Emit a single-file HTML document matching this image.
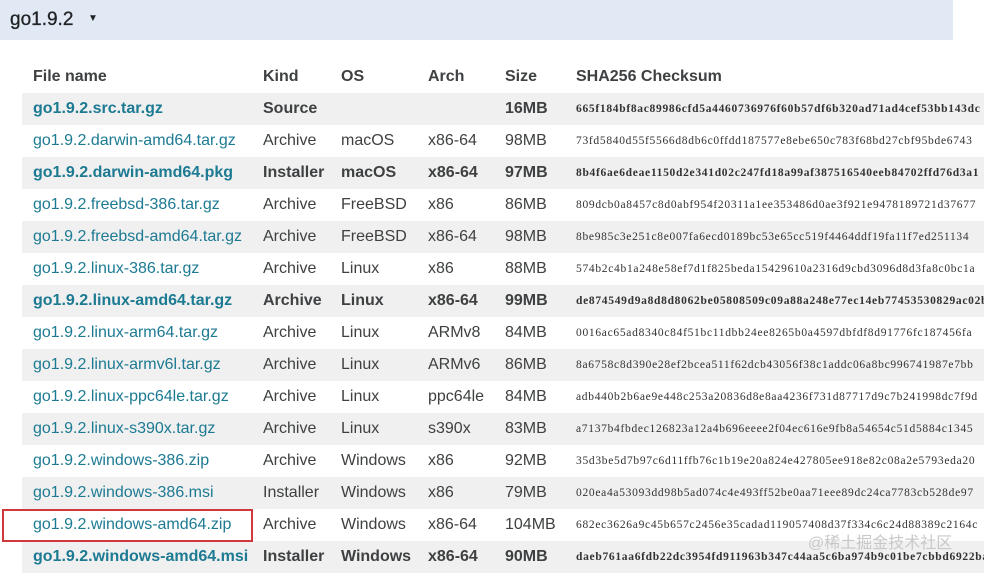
<!DOCTYPE html>
<html><head><meta charset="utf-8"><style>
body{margin:0;width:984px;height:569px;background:#fff;overflow:hidden;font-family:"Liberation Sans",Arial,sans-serif;position:relative}
.top{position:absolute;left:0;top:0;width:953px;height:40px;background:#e0e9f4}
.top span{position:absolute;left:10px;top:9px;font-size:19px;color:#202224;-webkit-text-stroke:0.3px #202224}
.top i{position:absolute;left:88px;top:13px;font-size:10px;font-style:normal;color:#202224}
table{position:absolute;left:22px;top:61px;border-collapse:collapse;width:962px;table-layout:fixed}
td,th{padding:0;height:32px;text-align:left;font-size:16px;color:#3e4042;white-space:nowrap;overflow:visible}
th{font-weight:bold;color:#3e4042;vertical-align:middle}
tr.s td{background:#f0f0f0}
td a{color:#1c7a92;text-decoration:none}
tr.b td{font-weight:bold}
td.h{font-family:"Liberation Serif",serif;font-size:11.5px;letter-spacing:0.7px;font-weight:normal!important;color:#333}
tr.b td.h{font-weight:bold!important}
.box{position:absolute;left:2px;top:509px;width:247px;height:29px;border:2px solid #d0393c}
.wm{position:absolute;left:808px;top:529px;font-size:16px;color:#c8c8c8;font-family:"Liberation Sans","Noto Sans CJK SC",sans-serif}
</style></head><body>
<div class="top"><span>go1.9.2</span><i>▼</i></div>
<table>
<colgroup><col style="width:241px"><col style="width:78px"><col style="width:87px"><col style="width:77px"><col style="width:71px"><col></colgroup>
<tr><th style="padding-left:11px">File name</th><th>Kind</th><th>OS</th><th>Arch</th><th>Size</th><th>SHA256 Checksum</th></tr>
<tr class="s b"><td style="padding-left:11px"><a>go1.9.2.src.tar.gz</a></td><td>Source</td><td></td><td></td><td>16MB</td><td class="h">665f184bf8ac89986cfd5a4460736976f60b57df6b320ad71ad4cef53bb143dc</td></tr>
<tr><td style="padding-left:11px"><a>go1.9.2.darwin-amd64.tar.gz</a></td><td>Archive</td><td>macOS</td><td>x86-64</td><td>98MB</td><td class="h">73fd5840d55f5566d8db6c0ffdd187577e8ebe650c783f68bd27cbf95bde6743</td></tr>
<tr class="s b"><td style="padding-left:11px"><a>go1.9.2.darwin-amd64.pkg</a></td><td>Installer</td><td>macOS</td><td>x86-64</td><td>97MB</td><td class="h">8b4f6ae6deae1150d2e341d02c247fd18a99af387516540eeb84702ffd76d3a1</td></tr>
<tr><td style="padding-left:11px"><a>go1.9.2.freebsd-386.tar.gz</a></td><td>Archive</td><td>FreeBSD</td><td>x86</td><td>86MB</td><td class="h">809dcb0a8457c8d0abf954f20311a1ee353486d0ae3f921e9478189721d37677</td></tr>
<tr class="s"><td style="padding-left:11px"><a>go1.9.2.freebsd-amd64.tar.gz</a></td><td>Archive</td><td>FreeBSD</td><td>x86-64</td><td>98MB</td><td class="h">8be985c3e251c8e007fa6ecd0189bc53e65cc519f4464ddf19fa11f7ed251134</td></tr>
<tr><td style="padding-left:11px"><a>go1.9.2.linux-386.tar.gz</a></td><td>Archive</td><td>Linux</td><td>x86</td><td>88MB</td><td class="h">574b2c4b1a248e58ef7d1f825beda15429610a2316d9cbd3096d8d3fa8c0bc1a</td></tr>
<tr class="s b"><td style="padding-left:11px"><a>go1.9.2.linux-amd64.tar.gz</a></td><td>Archive</td><td>Linux</td><td>x86-64</td><td>99MB</td><td class="h">de874549d9a8d8d8062be05808509c09a88a248e77ec14eb77453530829ac02b</td></tr>
<tr><td style="padding-left:11px"><a>go1.9.2.linux-arm64.tar.gz</a></td><td>Archive</td><td>Linux</td><td>ARMv8</td><td>84MB</td><td class="h">0016ac65ad8340c84f51bc11dbb24ee8265b0a4597dbfdf8d91776fc187456fa</td></tr>
<tr class="s"><td style="padding-left:11px"><a>go1.9.2.linux-armv6l.tar.gz</a></td><td>Archive</td><td>Linux</td><td>ARMv6</td><td>86MB</td><td class="h">8a6758c8d390e28ef2bcea511f62dcb43056f38c1addc06a8bc996741987e7bb</td></tr>
<tr><td style="padding-left:11px"><a>go1.9.2.linux-ppc64le.tar.gz</a></td><td>Archive</td><td>Linux</td><td>ppc64le</td><td>84MB</td><td class="h">adb440b2b6ae9e448c253a20836d8e8aa4236f731d87717d9c7b241998dc7f9d</td></tr>
<tr class="s"><td style="padding-left:11px"><a>go1.9.2.linux-s390x.tar.gz</a></td><td>Archive</td><td>Linux</td><td>s390x</td><td>83MB</td><td class="h">a7137b4fbdec126823a12a4b696eeee2f04ec616e9fb8a54654c51d5884c1345</td></tr>
<tr><td style="padding-left:11px"><a>go1.9.2.windows-386.zip</a></td><td>Archive</td><td>Windows</td><td>x86</td><td>92MB</td><td class="h">35d3be5d7b97c6d11ffb76c1b19e20a824e427805ee918e82c08a2e5793eda20</td></tr>
<tr class="s"><td style="padding-left:11px"><a>go1.9.2.windows-386.msi</a></td><td>Installer</td><td>Windows</td><td>x86</td><td>79MB</td><td class="h">020ea4a53093dd98b5ad074c4e493ff52be0aa71eee89dc24ca7783cb528de97</td></tr>
<tr><td style="padding-left:11px"><a>go1.9.2.windows-amd64.zip</a></td><td>Archive</td><td>Windows</td><td>x86-64</td><td>104MB</td><td class="h">682ec3626a9c45b657c2456e35cadad119057408d37f334c6c24d88389c2164c</td></tr>
<tr class="s b"><td style="padding-left:11px"><a>go1.9.2.windows-amd64.msi</a></td><td>Installer</td><td>Windows</td><td>x86-64</td><td>90MB</td><td class="h">daeb761aa6fdb22dc3954fd911963b347c44aa5c6ba974b9c01be7cbbd6922ba</td></tr>
</table>
<div class="box"></div>
<div class="wm">@稀土掘金技术社区</div>
</body></html>
